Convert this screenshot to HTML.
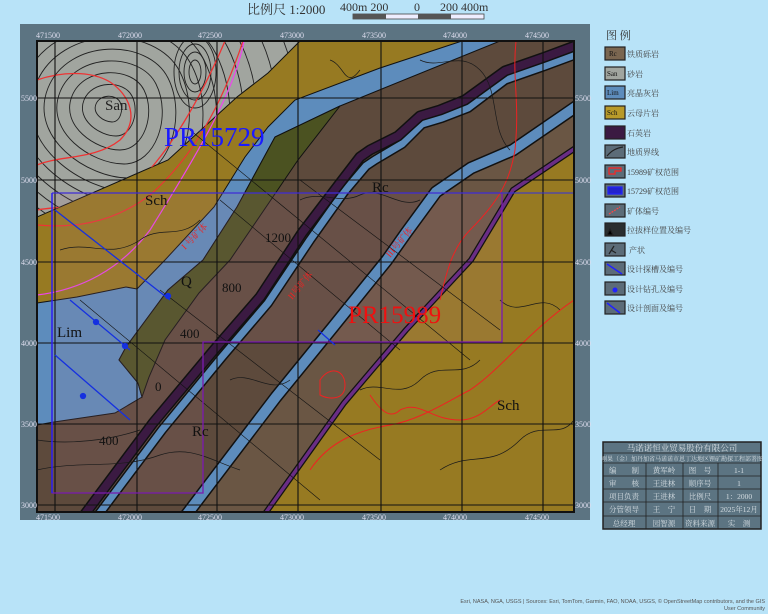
<!DOCTYPE html>
<html><head><meta charset="utf-8"><style>
html,body{margin:0;padding:0;background:#b8e3f8;width:768px;height:614px;overflow:hidden}
svg{display:block}
text{font-family:"Liberation Serif","Noto Serif CJK SC",serif}
.s{font-family:"Liberation Sans","Noto Sans CJK SC",sans-serif}
</style></head><body>
<svg width="768" height="614" viewBox="0 0 768 614" xmlns="http://www.w3.org/2000/svg">
<defs>
<clipPath id="m"><rect x="37" y="41" width="537" height="471"/></clipPath>
<clipPath id="san"><polygon points="37,41 300,41 268,73 237,97 168,160 37,217"/></clipPath>
</defs>
<!-- scale header -->
<text x="247" y="14" font-size="13" fill="#333">比例尺 1:2000</text>
<text x="340" y="11" font-size="12" fill="#333">400m 200</text>
<text x="414" y="11" font-size="12" fill="#333">0</text>
<text x="440" y="11" font-size="12" fill="#333">200 400m</text>
<rect x="353" y="14" width="131" height="5" fill="#eef" stroke="#444" stroke-width="0.8"/>
<rect x="353" y="14" width="33" height="5" fill="#555"/>
<rect x="418" y="14" width="33" height="5" fill="#555"/>
<!-- frame -->
<rect x="20" y="24" width="570" height="496" fill="#5c7482"/>
<g clip-path="url(#m)">
<rect x="37" y="41" width="537" height="471" fill="#5d4a3c"/>
<!-- Sch NW -->
<polygon points="37,41 462,41 380,68 295,100 268,127 245,157 214,207 165,260 137,289 37,303" fill="#977a22"/>
<!-- San -->
<polygon points="37,41 300,41 268,73 237,97 168,160 37,217" fill="#a1a59f" stroke="#111" stroke-width="1"/>
<g clip-path="url(#san)" fill="none" stroke="#222" stroke-width="0.9">
<g transform="translate(108,108)">
<path vector-effect="non-scaling-stroke" transform="scale(0.2)" d="M-60,-20 C-40,-70 40,-70 60,-30 C80,10 60,70 20,70 C-20,70 -80,30 -60,-20Z"/>
<path vector-effect="non-scaling-stroke" transform="scale(0.4)" d="M-60,-20 C-40,-70 40,-70 60,-30 C80,10 60,70 20,70 C-20,70 -80,30 -60,-20Z"/>
<path vector-effect="non-scaling-stroke" transform="scale(0.6)" d="M-60,-20 C-40,-70 40,-70 60,-30 C80,10 60,70 20,70 C-20,70 -80,30 -60,-20Z"/>
<path vector-effect="non-scaling-stroke" transform="scale(0.8)" d="M-60,-20 C-40,-70 40,-70 60,-30 C80,10 60,70 20,70 C-20,70 -80,30 -60,-20Z"/>
<path vector-effect="non-scaling-stroke" transform="scale(1)" d="M-60,-20 C-40,-70 40,-70 60,-30 C80,10 60,70 20,70 C-20,70 -80,30 -60,-20Z"/>
<path vector-effect="non-scaling-stroke" transform="scale(1.2)" d="M-60,-20 C-40,-70 40,-70 60,-30 C80,10 60,70 20,70 C-20,70 -80,30 -60,-20Z"/>
<path vector-effect="non-scaling-stroke" transform="scale(1.4)" d="M-60,-20 C-40,-70 40,-70 60,-30 C80,10 60,70 20,70 C-20,70 -80,30 -60,-20Z"/>
<path vector-effect="non-scaling-stroke" transform="scale(1.6)" d="M-60,-20 C-40,-70 40,-70 60,-30 C80,10 60,70 20,70 C-20,70 -80,30 -60,-20Z"/>
<path vector-effect="non-scaling-stroke" transform="scale(1.8)" d="M-60,-20 C-40,-70 40,-70 60,-30 C80,10 60,70 20,70 C-20,70 -80,30 -60,-20Z"/>
<path vector-effect="non-scaling-stroke" transform="scale(2.0)" d="M-60,-20 C-40,-70 40,-70 60,-30 C80,10 60,70 20,70 C-20,70 -80,30 -60,-20Z"/>
<path vector-effect="non-scaling-stroke" transform="scale(2.2)" d="M-60,-20 C-40,-70 40,-70 60,-30 C80,10 60,70 20,70 C-20,70 -80,30 -60,-20Z"/>
<path vector-effect="non-scaling-stroke" transform="scale(2.5)" d="M-60,-20 C-40,-70 40,-70 60,-30 C80,10 60,70 20,70 C-20,70 -80,30 -60,-20Z"/>
<path vector-effect="non-scaling-stroke" transform="scale(2.8)" d="M-60,-20 C-40,-70 40,-70 60,-30 C80,10 60,70 20,70 C-20,70 -80,30 -60,-20Z"/>
<path vector-effect="non-scaling-stroke" transform="scale(3.1)" d="M-60,-20 C-40,-70 40,-70 60,-30 C80,10 60,70 20,70 C-20,70 -80,30 -60,-20Z"/>
</g>
<g transform="translate(195,72)">
<ellipse rx="6" ry="12"/><ellipse rx="11" ry="20"/><ellipse rx="16" ry="28"/><ellipse rx="21" ry="36"/>
</g>
<path d="M37,80 C60,72 90,70 110,82 C130,95 140,120 120,140 C95,160 60,155 37,165" stroke="#e33" stroke-width="1.3"/>
<path d="M37,210 C60,205 100,212 140,180 C170,150 200,100 225,41" stroke="#e33" stroke-width="1.3"/>
</g>
<path d="M37,225 C70,228 110,225 150,195 C190,160 220,110 243,41" fill="none" stroke="#e33" stroke-width="1.2"/>
<path d="M244,41 C235,90 200,150 150,230 C120,270 80,290 37,295" fill="none" stroke="#e4e" stroke-width="1.2"/>
<!-- blue Lim + band -->
<polygon points="462,41 380,68 295,100 268,127 245,157 214,207 165,260 137,289 126,287 77,297 37,303 37,425 54,422 115,413 142,397 138,383 119,360 126,347 168,290 203,260 237,207 275,137 340,106 500,41" fill="#5d8cbc" stroke="#111" stroke-width="1"/>
<!-- olive Q -->
<polygon points="340,106 275,137 237,207 203,260 168,290 126,347 119,360 138,383 142,397 149,377 165,340 199,293 230,260 298,160" fill="#4b5221" stroke="#111" stroke-width="1"/>
<!-- lighter brown strip -->
<polygon points="576,106 513,150 471,168 436,192 406,233 387,260 333,327 276,397 186,515 264,515 344,403 406,330 471,260 513,190 576,147" fill="#6a5644"/>
<!-- SE Sch -->
<polygon points="576,147 513,190 471,260 406,330 344,403 264,515 576,515" fill="#977a22"/>
<!-- overlay rect -->
<polygon points="52,193 502,193 502,342 203,342 203,493 52,493" fill="#b07a90" fill-opacity="0.14"/>
<!-- second blue band -->
<polyline points="580,104 513,150 471,168 436,192 406,233 387,260 333,327 276,397 184,518" fill="none" stroke="#111" stroke-width="13" stroke-linejoin="round"/>
<polyline points="580,104 513,150 471,168 436,192 406,233 387,260 333,327 276,397 184,518" fill="none" stroke="#5d8cbc" stroke-width="10" stroke-linejoin="round"/>
<!-- thin purple line -->
<polyline points="580,145 513,190 471,260 406,330 344,403 262,518" fill="none" stroke="#111" stroke-width="6"/>
<polyline points="580,145 513,190 471,260 406,330 344,403 262,518" fill="none" stroke="#6a2d85" stroke-width="3.5"/>
<!-- main blue + purple band -->
<polyline points="580,53 545,66 505,80 468,108 442,118 422,124 402,144 375,160 366,166 344,192 310,240 268,303 222,357 162,430 96,518" fill="none" stroke="#111" stroke-width="10" stroke-linejoin="round"/>
<polyline points="580,53 545,66 505,80 468,108 442,118 422,124 402,144 375,160 366,166 344,192 310,240 268,303 222,357 162,430 96,518" fill="none" stroke="#5d8cbc" stroke-width="7" stroke-linejoin="round"/>
<polyline points="580,44 545,57 505,71 465,100 440,110 420,116 398,136 370,150 360,157 337,187 302,233 260,297 214,350 153,423 82,518" fill="none" stroke="#111" stroke-width="11" stroke-linejoin="round"/>
<polyline points="580,44 545,57 505,71 465,100 440,110 420,116 398,136 370,150 360,157 337,187 302,233 260,297 214,350 153,423 82,518" fill="none" stroke="#3b1a42" stroke-width="8" stroke-linejoin="round"/>
<!-- contours -->
<g fill="none" stroke="#1a1a1a" stroke-width="0.7">
<path d="M37,470 C80,460 120,470 160,455 C190,445 210,460 240,470"/>
<path d="M37,440 C70,445 110,440 140,430"/>
<path d="M300,200 C320,190 340,205 360,195 C380,185 400,210 420,200"/>
<path d="M420,60 C440,70 460,50 480,70 C500,90 490,130 510,150"/>
<path d="M360,390 C380,380 400,400 420,380 C440,360 460,380 480,360"/>
<path d="M440,470 C470,450 490,470 520,440 C540,420 560,440 574,420"/>
<path d="M500,300 C520,320 540,290 560,310"/>
<path d="M230,380 C250,370 270,395 290,380"/>
<path d="M330,60 C345,65 345,90 360,70"/>
<path d="M60,250 C90,240 110,260 140,240 C160,225 180,240 200,220"/>
</g>
<g fill="none" stroke="#e22" stroke-width="1">
<path d="M516,41 C512,80 520,100 515,150 C510,180 500,200 470,230 C450,250 445,280 440,300"/>
<path d="M320,380 C330,365 345,370 345,385 C345,400 330,400 320,395Z"/>
<path d="M310,470 C330,440 360,430 390,425 C420,420 450,400 470,390 C500,370 530,330 574,300"/>
<path d="M370,395 C380,410 390,420 400,410 C420,400 430,420 460,420 C480,420 490,405 500,400"/>
</g>
<!-- cross-section lines -->
<g stroke="#111" stroke-width="0.6">
<line x1="190" y1="130" x2="470" y2="360"/>
<line x1="220" y1="200" x2="400" y2="350"/>
<line x1="80" y1="300" x2="320" y2="500"/>
<line x1="160" y1="290" x2="380" y2="460"/>
<line x1="300" y1="180" x2="500" y2="330"/>
</g>
<!-- grid -->
<g stroke="#111" stroke-width="1.1">
<line x1="55" y1="41" x2="55" y2="512"/><line x1="137" y1="41" x2="137" y2="512"/><line x1="217" y1="41" x2="217" y2="512"/><line x1="298" y1="41" x2="298" y2="512"/><line x1="381" y1="41" x2="381" y2="512"/><line x1="462" y1="41" x2="462" y2="512"/><line x1="543" y1="41" x2="543" y2="512"/>
<line x1="37" y1="98" x2="574" y2="98"/><line x1="37" y1="180" x2="574" y2="180"/><line x1="37" y1="262" x2="574" y2="262"/><line x1="37" y1="343" x2="574" y2="343"/><line x1="37" y1="424" x2="574" y2="424"/><line x1="37" y1="505" x2="574" y2="505"/>
</g>
<!-- boundaries -->
<polyline points="52,193 502,193 502,342 203,342 203,493 52,493 52,193" fill="none" stroke="#7a1ab0" stroke-width="1.3"/>
<line x1="52" y1="193" x2="574" y2="193" stroke="#3030e0" stroke-width="0.9"/>
<line x1="52" y1="193" x2="52" y2="493" stroke="#2020ff" stroke-width="1.3"/>
<g stroke="#1530e0" stroke-width="1.3" fill="#1530e0">
<line x1="55" y1="210" x2="170" y2="300"/><circle cx="168" cy="296" r="2.5"/>
<line x1="70" y1="300" x2="130" y2="350"/><circle cx="96" cy="322" r="2.5"/><circle cx="125" cy="346" r="2.5"/>
<line x1="55" y1="355" x2="130" y2="420"/><circle cx="83" cy="396" r="2.5"/>
<line x1="318" y1="330" x2="335" y2="345"/>
</g>
<!-- labels -->
<text x="105" y="110" font-size="15" fill="#222">San</text>
<text x="164" y="146" font-size="27" fill="#1a1aff">PR15729</text>
<text x="145" y="205" font-size="15" fill="#111">Sch</text>
<text x="372" y="192" font-size="15" fill="#111">Rc</text>
<text x="265" y="242" font-size="13" fill="#111">1200</text>
<text x="181" y="286" font-size="15" fill="#111">Q</text>
<text x="222" y="292" font-size="13" fill="#111">800</text>
<text x="57" y="337" font-size="15" fill="#111">Lim</text>
<text x="180" y="338" font-size="13" fill="#111">400</text>
<text x="348" y="323" font-size="25" fill="#f01010">PR15989</text>
<text x="155" y="391" font-size="13" fill="#111">0</text>
<text x="99" y="445" font-size="13" fill="#111">400</text>
<text x="192" y="436" font-size="15" fill="#111">Rc</text>
<text x="497" y="410" font-size="15" fill="#111">Sch</text>
<text x="185" y="250" font-size="9" fill="#e22" transform="rotate(-45 185 250)">I 号矿体</text>
<text x="292" y="300" font-size="9" fill="#e22" transform="rotate(-50 292 300)">II号矿体</text>
<text x="390" y="258" font-size="9" fill="#e22" transform="rotate(-50 390 258)">III号矿体</text>
</g>
<!-- map border -->
<rect x="37" y="41" width="537" height="471" fill="none" stroke="#111" stroke-width="2"/>
<g class="s" font-size="8" fill="#dde">
<text x="36" y="38">471500</text><text x="118" y="38">472000</text><text x="198" y="38">472500</text><text x="280" y="38">473000</text><text x="362" y="38">473500</text><text x="443" y="38">474000</text><text x="525" y="38">474500</text>
<text x="36" y="520">471500</text><text x="118" y="520">472000</text><text x="198" y="520">472500</text><text x="280" y="520">473000</text><text x="362" y="520">473500</text><text x="443" y="520">474000</text><text x="525" y="520">474500</text>
<text x="21" y="101">5500</text><text x="21" y="183">5000</text><text x="21" y="265">4500</text><text x="21" y="346">4000</text><text x="21" y="427">3500</text><text x="21" y="508">3000</text>
<text x="575" y="101">5500</text><text x="575" y="183">5000</text><text x="575" y="265">4500</text><text x="575" y="346">4000</text><text x="575" y="427">3500</text><text x="575" y="508">3000</text>
</g>
<!-- legend -->
<text x="606" y="39" font-size="11" fill="#333">图 例</text>
<g stroke="#222" stroke-width="1.2" font-size="7">
<rect x="605" y="47" width="20" height="13" fill="#7a6650"/><text x="609" y="56" fill="#111" stroke="none">Rc</text>
<rect x="605" y="67" width="20" height="13" fill="#a1a59f"/><text x="607" y="76" fill="#111" stroke="none">San</text>
<rect x="605" y="86" width="20" height="13" fill="#5d8cbc"/><text x="607" y="95" fill="#111" stroke="none">Lim</text>
<rect x="605" y="106" width="20" height="13" fill="#b89a2a"/><text x="607" y="115" fill="#111" stroke="none">Sch</text>
<rect x="605" y="126" width="20" height="13" fill="#3b1a42"/>
<rect x="605" y="145" width="20" height="13" fill="#5c6c78"/><path d="M607,156 C612,150 617,148 623,147" fill="none"/>
<rect x="605" y="165" width="20" height="13" fill="#5c6c78"/><path d="M609,174 L609,168 L621,168 L621,171 L615,171 L615,174Z" fill="none" stroke="#f22"/>
<rect x="605" y="184" width="20" height="13" fill="#5c6c78"/><rect x="608" y="187" width="14" height="7" fill="#2222cc" stroke="#22f"/>
<rect x="605" y="204" width="20" height="13" fill="#5c6c78"/><line x1="609" y1="214" x2="620" y2="207" stroke="#f44" stroke-dasharray="2,1"/>
<rect x="605" y="223" width="20" height="13" fill="#2a2e30"/><path d="M607,235 L610,229 L613,235Z" fill="#000"/>
<rect x="605" y="243" width="20" height="13" fill="#5c6c78"/><path d="M609,254 L614,246 M611,250 L616,253" fill="none"/>
<rect x="605" y="262" width="20" height="13" fill="#5c6c78"/><line x1="607" y1="264" x2="622" y2="274" stroke="#22f" stroke-width="1.5"/>
<rect x="605" y="282" width="20" height="13" fill="#5c6c78"/><circle cx="615" cy="290" r="2.5" fill="#22f" stroke="none"/>
<rect x="605" y="301" width="20" height="13" fill="#5c6c78"/><line x1="607" y1="303" x2="620" y2="313" stroke="#22f" stroke-width="1.5"/>
</g>
<g font-size="8" fill="#444">
<text x="627" y="57">铁质砾岩</text><text x="627" y="77">砂岩</text><text x="627" y="96">亮晶灰岩</text><text x="627" y="116">云母片岩</text><text x="627" y="136">石英岩</text><text x="627" y="155">地质界线</text><text x="627" y="175">15989矿权范围</text><text x="627" y="194">15729矿权范围</text><text x="627" y="214">矿体编号</text><text x="627" y="233">拉拔样位置及编号</text><text x="629" y="253">产状</text><text x="627" y="272">设计探槽及编号</text><text x="627" y="292">设计钻孔及编号</text><text x="627" y="311">设计剖面及编号</text>
</g>
<!-- title block -->
<g stroke="#222" stroke-width="0.8">
<rect x="603" y="442" width="158" height="87" fill="#5c7482" stroke-width="1.5"/>
<line x1="603" y1="453" x2="761" y2="453"/><line x1="603" y1="463" x2="761" y2="463"/>
<line x1="603" y1="476" x2="761" y2="476"/><line x1="603" y1="489" x2="761" y2="489"/><line x1="603" y1="502" x2="761" y2="502"/><line x1="603" y1="516" x2="761" y2="516"/>
<line x1="646" y1="463" x2="646" y2="529"/><line x1="683" y1="463" x2="683" y2="529"/><line x1="718" y1="463" x2="718" y2="529"/>
</g>
<g font-size="7.5" fill="#d5dde2" text-anchor="middle">
<text x="682" y="451" font-size="8.5">马诺诺恒业贸易股份有限公司</text>
<text x="682" y="461" font-size="6">刚果（金）加丹加省马诺诺市恩丁达地区锂矿勘探工程部署图</text>
<text x="624" y="473">编　　制</text><text x="664" y="473">黄军岭</text><text x="700" y="473">图　号</text><text x="739" y="473">1-1</text>
<text x="624" y="486">审　　核</text><text x="664" y="486">王进林</text><text x="700" y="486">顺序号</text><text x="739" y="486">1</text>
<text x="624" y="499">项目负责</text><text x="664" y="499">王进林</text><text x="700" y="499">比例尺</text><text x="739" y="499">1：2000</text>
<text x="624" y="512">分管领导</text><text x="664" y="512">王　宁</text><text x="700" y="512">日　期</text><text x="739" y="512">2025年12月</text>
<text x="624" y="526">总经理</text><text x="664" y="526">园智源</text><text x="700" y="526">资料来源</text><text x="739" y="526">实　测</text>
</g>
<text class="s" x="765" y="603" font-size="5.5" fill="#555" text-anchor="end">Esri, NASA, NGA, USGS | Sources: Esri, TomTom, Garmin, FAO, NOAA, USGS, © OpenStreetMap contributors, and the GIS</text>
<text class="s" x="765" y="610" font-size="5.5" fill="#555" text-anchor="end">User Community</text>
</svg>
</body></html>
